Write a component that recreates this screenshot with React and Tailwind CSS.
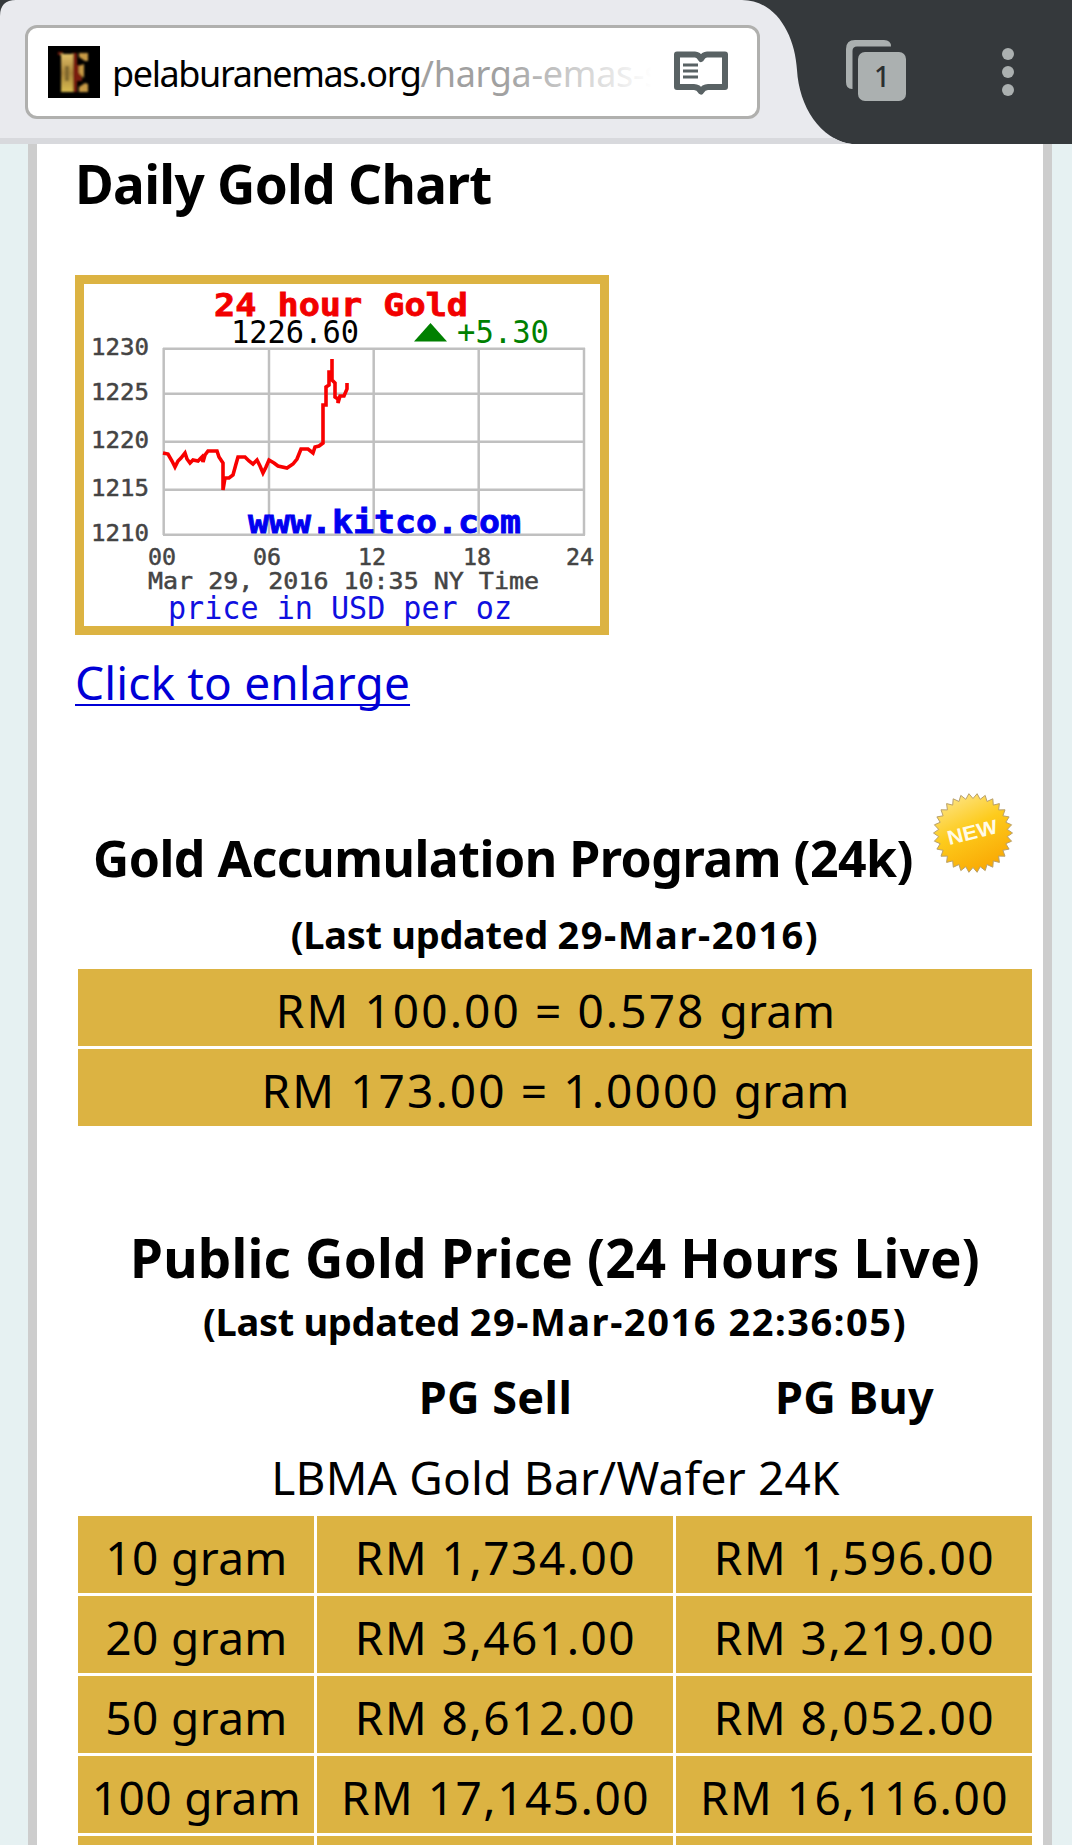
const rates = ['RM 100.00 = 0.578', 'RM 173.00 = 1.0000'];

const prices = [
  { weight: '10 gram', sell: 'RM 1,734.00', buy: 'RM 1,596.00' },
  { weight: '20 gram', sell: 'RM 3,461.00', buy: 'RM 3,219.00' },
  { weight: '50 gram', sell: 'RM 8,612.00', buy: 'RM 8,052.00' },
  { weight: '100 gram', sell: 'RM 17,145.00', buy: 'RM 16,116.00' },
  { weight: '', sell: '', buy: '' },
];

const yTicks = [
  { label: '1230', text: 70.5, line: 64.7 },
  { label: '1225', text: 115.5, line: 109.7 },
  { label: '1220', text: 163.5, line: 157.7 },
  { label: '1215', text: 211.5, line: 205.7 },
  { label: '1210', text: 256.5, line: 250.7 },
];

const xTicks = [
  { label: '00', text: 64, line: 79.7 },
  { label: '06', text: 169, line: 185 },
  { label: '12', text: 274, line: 289.7 },
  { label: '18', text: 379, line: 394.7 },
  { label: '24', text: 482, line: 500 },
];

const goldLine =
  '79,169 84,170 88,177 91,183 94,177 97,174 101,169 103,175 106,179 109,176 114,177 118,173 119,178 121,171 124,167 133,167 135,173 139,179 139,206 141,194 145,194 149,191 152,180 154,173 161,173 165,177 169,180 173,176 176,182 179,189 182,183 185,176 190,179 194,182 203,184 209,180 213,175 217,165 224,165 229,169 231,163 235,162 239,159 239,121 242,121 242,103 245,101 245,88 248,88 248,75 248,96 251,99 251,113 254,115 254,119 256,112 260,112 263,105 263,99';

// Starburst outline of the NEW sticker
const burst = Array.from({ length: 60 }, (_, i) => {
  const r = i % 2 ? 34.5 : 39.5;
  const a = (i * Math.PI) / 30;
  return `${(40 + r * Math.cos(a)).toFixed(1)},${(40 + r * Math.sin(a)).toFixed(1)}`;
}).join(' ');

function Favicon() {
  return (
    <svg viewBox="0 0 52 52" className="w-[52px] h-[52px] flex-shrink-0">
      <defs>
        <linearGradient id="bar" x1="0" y1="0" x2="0" y2="1">
          <stop offset="0" stopColor="#e0c068" />
          <stop offset="0.5" stopColor="#a8843a" />
          <stop offset="1" stopColor="#d8bc50" />
        </linearGradient>
        <filter id="soft">
          <feGaussianBlur stdDeviation="0.9" />
        </filter>
      </defs>
      <rect width="52" height="52" fill="#000" />
      <g filter="url(#soft)">
        <path d="M10 6h5v3h-5z M24 7h5v39h-5z M29 19h5v16h-5z" fill="#7a1c08" />
        <rect x="13" y="8" width="12" height="38" fill="url(#bar)" />
        <rect x="17" y="20" width="4" height="15" fill="#80672e" />
        <path d="M31 7h9v8h-3l-6-4z M31 20l5-2v14l-5-5z M31 41l6-4 3 1v8h-9z" fill="#c79a45" />
      </g>
    </svg>
  );
}

function BookIcon() {
  return (
    <svg viewBox="0 0 54 46" className="w-[54px] h-[46px] flex-shrink-0">
      <path
        d="M3 3.500h18q3.500 0 6 4.500q2.500-4.500 6-4.500h18v32.500h-17q-4.500 0-7 4.500q-2.500-4.500-7-4.500h-17z"
        fill="none"
        stroke="#596264"
        strokeWidth="6"
        strokeLinejoin="round"
      />
      <path d="M9 14h15M9 20h15M9 26h15" stroke="#596264" strokeWidth="2.800" />
    </svg>
  );
}

function BrowserBar() {
  return (
    <header className="relative h-36 bg-[#35393c] flex">
      <svg viewBox="0 0 852 144" className="absolute left-0 top-0 w-[852px] h-36">
        <path d="M0 144V16Q0 0 16 0H742C776 0 795 35 797 70C799 106 820 140 852 144Z" fill="#e9eaee" />
        <path d="M0 138H834Q842 143 852 144H0Z" fill="#d8d9dd" />
      </svg>
      <div className="relative ml-[25px] mt-[25px] w-[735px] h-[94px] rounded-xl border-3 border-[#b0b0ae] bg-white flex items-center pl-5 pr-[29px]">
        <Favicon />
        <div className="relative ml-3 w-[540px] h-16 leading-[67px] overflow-hidden whitespace-nowrap text-[36px] tracking-[-1.4px]">
          pelaburanemas.org<span className="text-[#a0a0a0] tracking-[-0.3px]">/harga-emas-s</span>
          <div className="absolute right-0 top-0 h-full w-[150px] bg-gradient-to-r from-transparent to-white" />
        </div>
        <div className="ml-auto mt-1">
          <BookIcon />
        </div>
      </div>
      <div className="relative ml-[86px] mt-10 w-[60px] h-[61px]">
        <svg viewBox="0 0 60 61" className="w-[60px] h-[61px]">
          <path d="M6 49q-6 0-6-7V9q0-9 9-9h29q7 0 7 6.500H11q-4.500 0-4.500 4.500v38z" fill="#abb0b0" />
          <rect x="12" y="12" width="48" height="49" rx="7" fill="#abb0b0" />
        </svg>
        <span className="absolute left-3 top-3 w-12 h-[49px] text-center text-[28px] leading-[48px] font-medium text-[#2b2f31]">1</span>
      </div>
      <div className="ml-24 mt-12 flex flex-col gap-1.5">
        <i className="w-3 h-3 rounded-full bg-[#abb0b0]" />
        <i className="w-3 h-3 rounded-full bg-[#abb0b0]" />
        <i className="w-3 h-3 rounded-full bg-[#abb0b0]" />
      </div>
    </header>
  );
}

function GoldChart() {
  return (
    <div className="w-[534px] h-[360px] border-9 border-[#dcb342]">
      <svg viewBox="0 0 516 342" className="w-full h-full font-['DejaVu_Sans_Mono',monospace]">
        {yTicks.map((t) => (
          <path key={t.label} d={`M79 ${t.line}H501`} stroke="#c0c0c0" strokeWidth="2.500" />
        ))}
        {xTicks.map((t) => (
          <path key={t.label} d={`M${t.line} 64V251`} stroke="#c0c0c0" strokeWidth="2.500" />
        ))}
        <polyline points={goldLine} fill="none" stroke="#f80000" strokeWidth="3.600" />
        <g fill="#444" stroke="#444" strokeWidth="0.500" fontSize="23.500">
          {yTicks.map((t) => (
            <text key={t.label} x="7" y={t.text} textLength="58" lengthAdjust="spacingAndGlyphs">{t.label}</text>
          ))}
          {xTicks.map((t) => (
            <text key={t.label} x={t.text} y="281" textLength="28" lengthAdjust="spacingAndGlyphs">{t.label}</text>
          ))}
          <text x="64" y="305" textLength="391" lengthAdjust="spacingAndGlyphs">Mar 29, 2016 10:35 NY Time</text>
        </g>
        <text x="130" y="32" fontSize="32" fontWeight="700" fill="#f20000" stroke="#f20000" strokeWidth="0.800" textLength="254" lengthAdjust="spacingAndGlyphs">24 hour Gold</text>
        <text x="147" y="58.500" fontSize="31.500" fill="#000" textLength="128" lengthAdjust="spacingAndGlyphs">1226.60</text>
        <path d="M330 57.500L346.500 39L363 57.500Z" fill="#008000" />
        <text x="373" y="58.500" fontSize="31.500" fill="#008000" textLength="92" lengthAdjust="spacingAndGlyphs">+5.30</text>
        <text x="164" y="248.500" fontSize="32" fontWeight="700" fill="#0000f0" stroke="#0000f0" strokeWidth="0.800" textLength="273" lengthAdjust="spacingAndGlyphs">www.kitco.com</text>
        <text x="84" y="334.500" fontSize="31.500" fill="#1010e0" textLength="344" lengthAdjust="spacingAndGlyphs">price in USD per oz</text>
      </svg>
    </div>
  );
}

function NewBadge() {
  return (
    <svg viewBox="0 0 80 80" className="w-20 h-20 flex-shrink-0">
      <defs>
        <linearGradient id="sticker" x1="0.200" y1="0" x2="0.700" y2="1">
          <stop offset="0" stopColor="#fde58a" />
          <stop offset="0.450" stopColor="#fdcb1c" />
          <stop offset="1" stopColor="#f9a602" />
        </linearGradient>
      </defs>
      <polygon points={burst} fill="url(#sticker)" stroke="#b9a06a" strokeWidth="1" />
      <text x="14" y="46" fontSize="20" fontWeight="700" fill="#fffbe8" textLength="51" lengthAdjust="spacingAndGlyphs" transform="rotate(-14 40 40)" className="font-['Liberation_Sans']">
        NEW
      </text>
    </svg>
  );
}

function Updated({ date }) {
  return (
    <p className="h-[58px] whitespace-nowrap text-center text-[38px] leading-[48px] font-bold tracking-[-0.3px]">
      (Last updated <span className="tracking-[1.55px]">{date})</span>
    </p>
  );
}

function Cell({ className = '', children }) {
  return (
    <div className={`h-[77px] pt-1 pl-px leading-[74px] text-center whitespace-nowrap ${className}`}>{children}</div>
  );
}

export default function App() {
  return (
    <div className="w-[1072px] h-[1845px] overflow-hidden bg-[#e6f1f2] text-black font-['Noto_Sans',sans-serif]">
      <BrowserBar />
      <main className="ml-7 w-[1024px] h-[1701px] overflow-hidden border-x-9 border-[#cdcdcd] bg-white pl-[38px] pt-2">
        <h2 className="text-[53px] leading-[64px] font-bold tracking-[-0.7px]">Daily Gold Chart</h2>
        <div className="mt-[59px]">
          <GoldChart />
        </div>
        <a href="#" className="block w-fit mt-[19px] text-[46px] leading-[56px] tracking-[0.15px] text-[#0000d6] underline decoration-2 underline-offset-[4px] [text-decoration-skip-ink:none]">
          Click to enlarge
        </a>

        <section className="ml-[3px] w-[954px]">
          <div className="mt-[83px] h-[117px] flex pl-[15px]">
            <h2 className="mt-[34px] w-[840px] whitespace-nowrap text-[50px] leading-[62px] font-bold tracking-[-0.5px]">Gold Accumulation Program (24k)</h2>
            <NewBadge />
          </div>
          <Updated date="29-Mar-2016" />
          <div className="mt-px flex flex-col gap-[3px] text-[46px] tracking-[2.1px]">
            {rates.map((rate) => (
              <Cell key={rate} className="bg-[#dcb342]">
                {rate} <span className="tracking-[0.1px]">gram</span>
              </Cell>
            ))}
          </div>
        </section>

        <section className="ml-[3px] w-[954px]">
          <h2 className="mt-[100px] mb-[7px] whitespace-nowrap text-center text-[53px] leading-[64px] font-bold tracking-[0.2px]">Public Gold Price (24 Hours Live)</h2>
          <Updated date="29-Mar-2016 22:36:05" />
          <div className="mt-px grid grid-cols-[236px_356px_356px] gap-[3px] text-[46px]">
            <Cell />
            <Cell className="text-[45px] font-bold tracking-[0.4px]">PG Sell</Cell>
            <Cell className="text-[45px] font-bold tracking-[0.3px]">PG Buy</Cell>
            <Cell className="col-span-3 tracking-[0.2px]">LBMA Gold Bar/Wafer 24K</Cell>
            {prices.map((row) => [
              <Cell key={`${row.weight}-w`} className="bg-[#dcb342] tracking-[0.4px]">{row.weight}</Cell>,
              <Cell key={`${row.weight}-s`} className="bg-[#dcb342] tracking-[1.5px]">{row.sell}</Cell>,
              <Cell key={`${row.weight}-b`} className="bg-[#dcb342] tracking-[1.5px]">{row.buy}</Cell>,
            ])}
          </div>
        </section>
      </main>
    </div>
  );
}
